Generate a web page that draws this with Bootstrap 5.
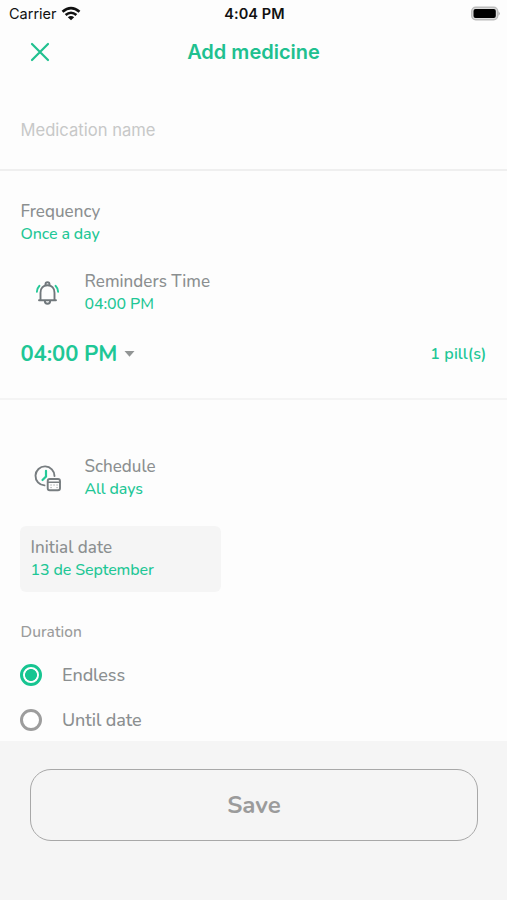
<!DOCTYPE html>
<html lang="en">
<head>
<meta charset="utf-8">
<meta name="viewport" content="width=device-width, initial-scale=1">
<title>Add medicine</title>
<link href="https://cdn.jsdelivr.net/npm/bootstrap@5.3.0/dist/css/bootstrap.min.css" rel="stylesheet">
<style>
:root{--green:#1fc796;--gray:#8b8f90}
body{font-family:Nunito,Lato,"Open Sans",sans-serif;background:#fdfdfd;color:var(--gray);min-height:900px}
.screen{height:900px}
.ios{font-family:Inter,"Liberation Sans",sans-serif}
.statusbar{height:28px;padding:0 7px 0 9px;color:#111;font-size:14.5px;line-height:28px}
.statusbar .side{width:90px}
.clock{font-weight:600;letter-spacing:.1px}
.titlebar{height:48px;padding:0 30px}
.titlebar h1{font-size:20px;font-weight:600;line-height:48px;color:#20c08f}
.titlebar .side{width:20px}
.name-field{height:95px;padding:41px 20.5px 0;border-bottom:2px solid #efefef}
.name-field input{font-size:16.6px;line-height:26px;height:26px;background:transparent}
.name-field input::placeholder{color:#c7c8c8;opacity:1}
.freq{height:229px;padding:29px 20.5px 0;border-bottom:2px solid #f4f4f4}
.line-title{font-size:17px;line-height:23px;font-weight:500;white-space:nowrap;letter-spacing:.03px}
.line-value{font-size:16px;line-height:23px;font-weight:500;letter-spacing:-.12px;color:var(--green);white-space:nowrap}
.pills{font-weight:600;letter-spacing:.1px}
.entry{padding-left:13.5px}
.entry svg{width:28px;height:28px;margin-right:22.5px}
.time-row{margin-top:24px}
.big-time{font-size:22px;line-height:28px;font-weight:700;color:var(--green);letter-spacing:-.1px}
.big-time svg{margin-left:7px}
.schedule{padding:55px 20.5px 0}
.date-box{width:201px;height:66px;margin:25px 0 0 -.5px;padding:10px 10.5px;background:#f5f5f5;border-radius:6px}
.duration{font-size:15.5px;line-height:20px;margin-top:30px;font-weight:500;letter-spacing:.05px;color:#9a9b9b}
.choice{height:22px;margin-left:-.5px;font-size:18px;line-height:22px;font-weight:500;letter-spacing:-.1px}
.choice input{appearance:none;width:22px;height:22px;border:3px solid #9d9d9d;border-radius:50%;margin:0 20px 0 0;background:#fff}
.choice input:checked{border-color:#17c591;background:radial-gradient(circle,#17c591 0 5.6px,#fff 6.3px)}
.c-one{margin-top:22px}
.c-two{margin-top:23px}
.footer-area{height:159px;padding:28px 29px 0 30px;background:#f5f5f5}
.save-btn{height:72px;border:1.5px solid #a8a8a8;border-radius:21px;color:#9b9b9b;font-size:24px;font-weight:700}
</style>
</head>
<body>
<main class="screen d-flex flex-column overflow-hidden">
  <div class="statusbar ios d-flex justify-content-between align-items-center flex-shrink-0">
    <div class="side d-flex align-items-center"><span>Carrier</span>
      <svg class="ms-1" width="20" height="16" viewBox="0 0 20 16" fill="none" stroke="#111" stroke-width="2.6"><path d="M1.500 5.800Q10-1.700 18.500 5.800M4.600 9.100Q10 4.400 15.400 9.100"/><path d="M6.800 11.200Q10 8.800 13.200 11.200L10 14.300Z" fill="#111" stroke="none"/></svg>
    </div>
    <span class="clock">4:04 PM</span>
    <div class="side d-flex justify-content-end">
      <svg width="30" height="16" viewBox="0 0 30 16"><rect x="1.700" y="1.200" width="26" height="12.600" rx="4" fill="#ddd" stroke="#bcbcbc" stroke-width="1.400"/><rect x="3.500" y="2.900" width="22.300" height="9.200" rx="2" fill="#000"/><path d="M28.500 5.200Q31 7.500 28.500 9.800Z" fill="#aaa"/></svg>
    </div>
  </div>
  <header class="titlebar ios d-flex justify-content-between align-items-center flex-shrink-0">
    <button class="btn p-0 border-0 side d-flex" aria-label="Close"><svg width="20" height="20" viewBox="0 0 20 20" stroke="#20c08f" stroke-width="2.200" stroke-linecap="round"><path d="M2 2 18 18M18 2 2 18"/></svg></button>
    <h1 class="m-0">Add medicine</h1>
    <span class="side"></span>
  </header>
  <div class="name-field ios flex-shrink-0"><input class="border-0 p-0 w-100" type="text" placeholder="Medication name"></div>

  <section class="freq flex-shrink-0">
    <div class="line-title">Frequency</div>
    <div class="line-value">Once a day</div>
    <div class="entry d-flex align-items-center mt-4">
      <svg viewBox="0 0 28 28" fill="none" stroke="#70777b" stroke-width="1.900" stroke-linecap="round" stroke-linejoin="round"><path d="M5 21.300H22M6.500 21V13.800C6.500 9 9.500 6.300 13.500 6.300S20.500 9 20.500 13.800V21M11.500 6.300V5.300A2 2 0 0 1 15.500 5.300V6.300M10.800 22A2.700 2.700 0 0 0 16.200 22"/><path d="M5.500 6.800Q3.200 9 2.900 12.800M21.500 6.800Q23.800 9 24.100 12.800" stroke="#25c998"/></svg>
      <div><div class="line-title">Reminders Time</div><div class="line-value">04:00 PM</div></div>
    </div>
    <div class="time-row d-flex align-items-center justify-content-between">
      <div class="big-time d-flex align-items-center">04:00 PM <svg width="11" height="6" viewBox="0 0 11 6"><path d="M.5 0H10.500L5.500 5.800Z" fill="#929595"/></svg></div>
      <span class="line-value pills">1 pill(s)</span>
    </div>
  </section>

  <section class="schedule flex-grow-1">
    <div class="entry d-flex align-items-center">
      <svg viewBox="0 0 28 28" fill="none" stroke="#777d80" stroke-width="1.900" stroke-linecap="round"><path d="M20.500 12A9.500 9.500 0 1 0 10.500 21.400"/><path d="M12 6.800V12.500L8.500 16" stroke="#25c998" stroke-width="2.200"/><rect x="13.700" y="15" width="12.300" height="11.200" rx="2"/><path d="M14 18.300H26" stroke-width="1.400"/><path d="M17 21h.1M20 21h.1M23 21h.1M17 23.600h.1M23 23.600h.1" stroke-width="1"/></svg>
      <div><div class="line-title">Schedule</div><div class="line-value">All days</div></div>
    </div>
    <div class="date-box"><div class="line-title">Initial date</div><div class="line-value">13 de September</div></div>
    <div class="duration">Duration</div>
    <label class="choice d-flex align-items-center c-one"><input type="radio" name="duration" checked><span>Endless</span></label>
    <label class="choice d-flex align-items-center c-two"><input type="radio" name="duration"><span>Until date</span></label>
  </section>

  <footer class="footer-area flex-shrink-0"><button class="save-btn btn w-100 p-0">Save</button></footer>
</main>
<script src="https://cdn.jsdelivr.net/npm/bootstrap@5.3.0/dist/js/bootstrap.bundle.min.js"></script>
</body>
</html>
